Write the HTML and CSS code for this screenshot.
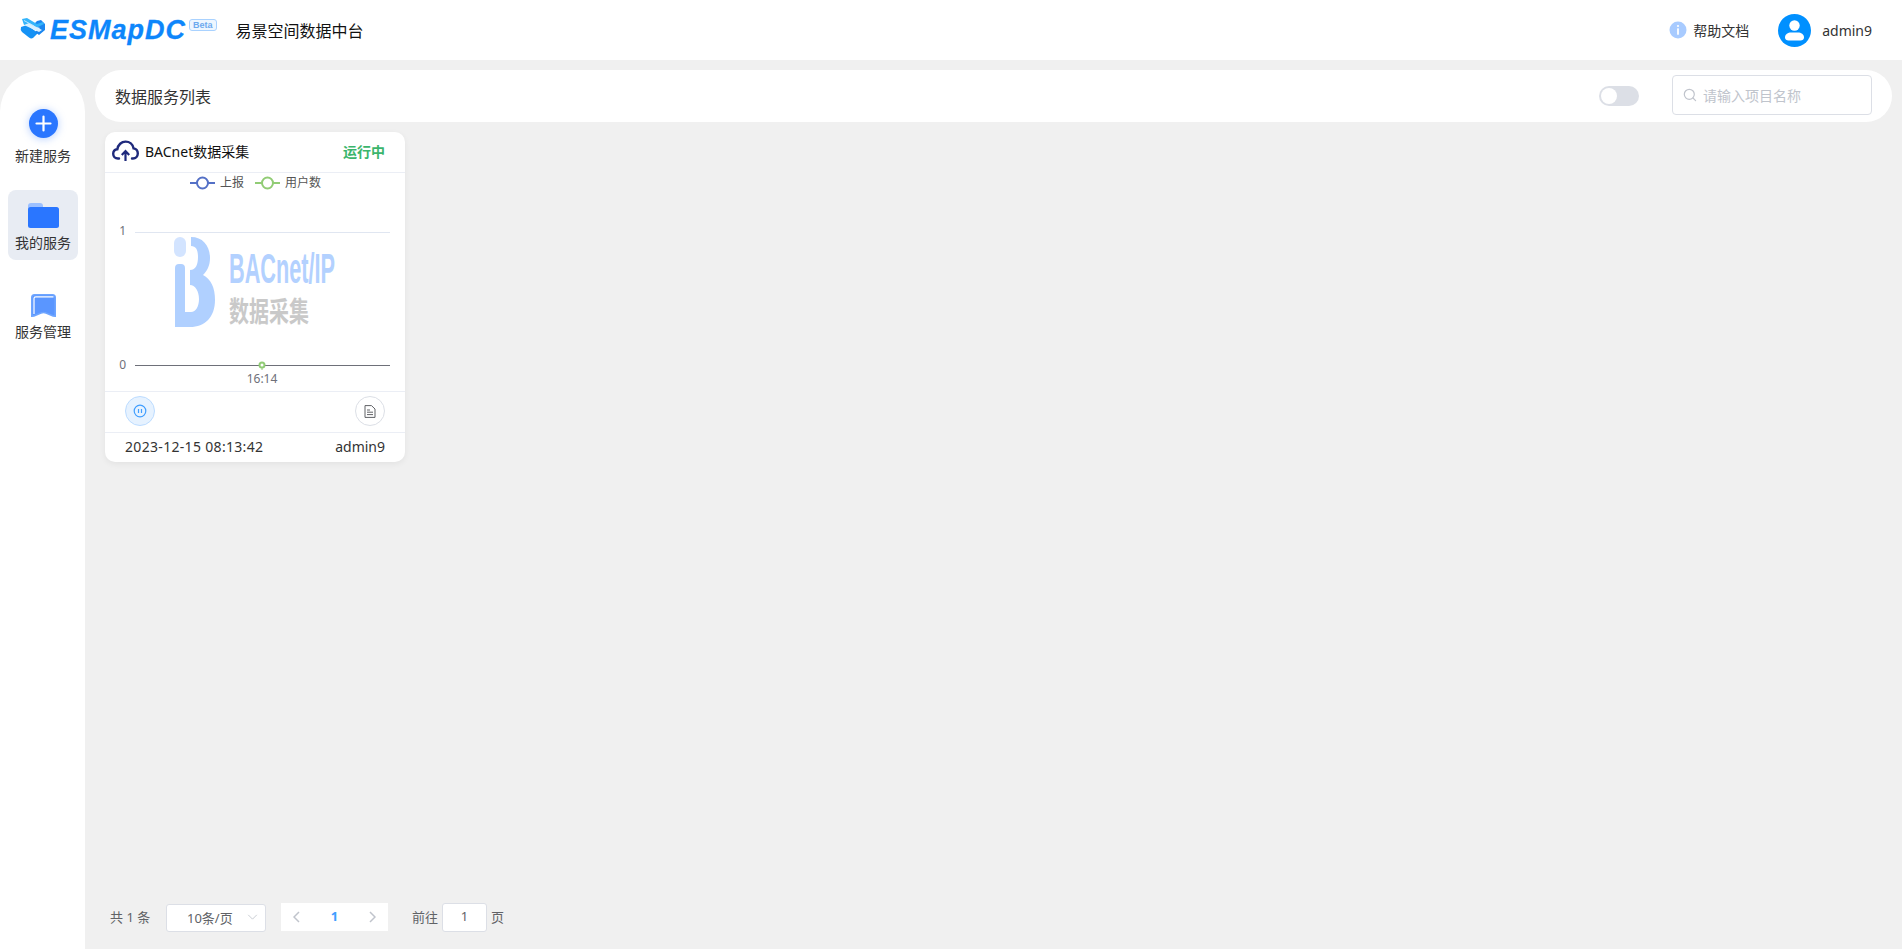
FILE: index.html
```html
<!DOCTYPE html>
<html lang="zh-CN">
<head>
<meta charset="utf-8">
<title>易景空间数据中台</title>
<link rel="stylesheet" href="styles.css">
</head>
<body>
<header class="topbar">
  <div class="brand">
    <svg class="brand-mark" viewBox="0 0 26 21" width="26" height="21">
      <path d="M1 9 L7 7 L18 15 L13 20 Q11 21 9 19.500 L2 14 Q0 12 1 9 Z" fill="#1592f5"/>
      <path d="M12 8 L17 3 L21 2 L25 6 L25 12 L19 17 L15 14 L20 10 Z" fill="#1a86f0"/>
      <path d="M2 1 L7 0 L17 6 L23 4 L24 6 L16 10 L13 8 L4 7 Z" fill="#33b4fb"/>
      <path d="M4 7 L9 5 L22 12 L19 14 Z" fill="#d8f0ff"/>
      <path d="M4 2.500 L14 8" stroke="#bfe6ff" stroke-width="1" fill="none"/>
    </svg>
    <span class="brand-name">ESMapDC</span>
    <span class="brand-beta">Beta</span>
    <span class="brand-title">易景空间数据中台</span>
  </div>
  <div class="top-right">
    <svg class="help-icon" viewBox="0 0 18 18" width="18" height="18">
      <circle cx="9" cy="9" r="8.5" fill="#a8cbff"/>
      <circle cx="9" cy="5" r="1.1" fill="#fff"/>
      <rect x="8.1" y="7.2" width="1.8" height="6.6" rx=".6" fill="#fff"/>
    </svg>
    <span class="help-text">帮助文档</span>
    <svg class="avatar" viewBox="0 0 33 33" width="33" height="33">
      <circle cx="16.5" cy="16.5" r="16.5" fill="#0090ff"/>
      <circle cx="16.5" cy="11.5" r="5.2" fill="#fff"/>
      <path d="M7 23.5 C7 20 10 18.5 13 18.5 L20 18.5 C23 18.5 26 20 26 23.5 C26 25.5 24.5 26.5 22.5 26.5 L10.5 26.5 C8.5 26.5 7 25.5 7 23.5 Z" fill="#fff"/>
    </svg>
    <span class="user-name">admin9</span>
  </div>
</header>

<div class="shell">
  <aside class="sidebar">
    <a class="nav-item nav-add">
      <svg class="nav-plus" viewBox="0 0 29 29" width="29" height="29">
        <circle cx="14.5" cy="14.5" r="14.5" fill="#2a76ff"/>
        <path d="M14.5 7.5 V21.5 M7.5 14.5 H21.5" stroke="#fff" stroke-width="2.2" stroke-linecap="round"/>
      </svg>
      <span class="nav-label">新建服务</span>
    </a>
    <a class="nav-item nav-active">
      <svg viewBox="0 0 31 26" width="31" height="26">
        <path d="M0 3 Q0 0 3 0 L12 0 Q15 0 15 3 L15 8 L0 8 Z" fill="#9cc0ff"/>
        <rect x="0" y="4" width="31" height="21" rx="2.5" fill="#2a76ff"/>
      </svg>
      <span class="nav-label">我的服务</span>
    </a>
    <a class="nav-item nav-last">
      <svg viewBox="0 0 25 23" width="25" height="23">
        <path d="M.8 3.500 Q.8 .8 3.500 .8 L21.500 .8 Q24.200 .8 24.200 3.500 L24.200 22.200 C21 22.200 16 18.500 12.500 18.500 C9 18.500 4 22.200 .8 22.200 Z" fill="#5a96ff" stroke="#6ea5ff" stroke-width="1.600"/>
        <path d="M3 20 V4.500 Q3 2.800 4.800 2.800 L22.500 2.800" fill="none" stroke="#fff" stroke-width="1.200"/>
      </svg>
      <span class="nav-label">服务管理</span>
    </a>
  </aside>

  <main class="content">
    <div class="titlebar">
      <span class="page-title">数据服务列表</span>
      <div class="title-tools">
        <span class="switch"><span class="switch-knob"></span></span>
        <label class="search">
          <svg viewBox="0 0 14 14" width="14" height="14">
            <circle cx="6.3" cy="6.3" r="5" fill="none" stroke="#c0c4cc" stroke-width="1.2"/>
            <path d="M10 10 L12.6 12.6" stroke="#c0c4cc" stroke-width="1.2" stroke-linecap="round"/>
          </svg>
          <span class="search-ph">请输入项目名称</span>
        </label>
      </div>
    </div>

    <div class="cards">
      <article class="card">
        <div class="card-head">
          <svg class="cloud" viewBox="0 0 27 22" width="27" height="22">
            <path d="M7 18.5 H6 C3 18.5 1.2 16.3 1.2 13.8 C1.2 11.2 3 9.4 5.4 9.2 C6 4.8 9.4 1.6 13.6 1.6 C17.6 1.6 20.8 4.4 21.6 8.4 C24 8.8 25.8 11 25.8 13.6 C25.8 16.4 23.6 18.5 21 18.5 H20" fill="none" stroke="#1f2a7c" stroke-width="2.4" stroke-linecap="round"/>
            <path d="M13.5 21 V11.5 M9.8 15 L13.5 11 L17.2 15" fill="none" stroke="#1f2a7c" stroke-width="2.2"/>
          </svg>
          <span class="card-title">BACnet数据采集</span>
          <span class="card-status">运行中</span>
        </div>
        <div class="card-chart">
          <svg class="chart-svg" viewBox="105 173 300 218" width="300" height="218">
            <g fill="none" stroke-width="2">
              <path d="M190 183 H215" stroke="#5470c6"/>
              <circle cx="202.500" cy="183" r="5.500" fill="#fff" stroke="#5470c6"/>
              <path d="M255 183 H280" stroke="#91cc75"/>
              <circle cx="267.500" cy="183" r="5.500" fill="#fff" stroke="#91cc75"/>
            </g>
            <text class="legend-text" x="220" y="187">上报</text>
            <text class="legend-text" x="285" y="187">用户数</text>
            <path d="M135 232.500 H390" stroke="#e0e6f1"/>
            <text class="axis-text" x="126" y="235" text-anchor="end">1</text>
            <rect x="174" y="237" width="12" height="20" rx="6" fill="#d3e4ff"/>
            <path d="M191 237 C203 237 210 246 210 258 C210 266 207 271 203 275 C211 279 215 288 215 300 C215 317 205 327 190 327 L175 327 L175 268 Q175 264 179 264 L181 264 Q185 264 185 268 L185 312 L191 312 C196 312 199 306 199 299 C199 291 195 285 190 285 L190 270 C196 270 198 264 198 257 C198 250 196 246 191 246 Z" fill="#b0d0ff"/>
            <text class="wm-latin" transform="translate(229 283) scale(1 2)">BACnet/IP</text>
            <text class="wm-cjk" transform="translate(229 322) scale(1 1.400)">数据采集</text>
            <path d="M135 365.500 H390" stroke="#6e7079"/>
            <text class="axis-text" x="126" y="369" text-anchor="end">0</text>
            <path d="M262 366 V370" stroke="#91cc75"/>
            <circle cx="262" cy="365" r="2.500" fill="#fff" stroke="#91cc75" stroke-width="2"/>
            <text class="axis-text" x="262" y="383" text-anchor="middle">16:14</text>
          </svg>
        </div>
        <div class="card-actions">
          <span class="round-btn round-on">
            <svg viewBox="0 0 14 14" width="14" height="14">
              <circle cx="7" cy="7" r="5.800" fill="none" stroke="#409eff" stroke-width="1.200"/>
              <path d="M5.500 5 V9 M8.500 5 V9" stroke="#409eff" stroke-width="1.200"/>
            </svg>
          </span>
          <span class="round-btn">
            <svg viewBox="0 0 12 13" width="12" height="13">
              <path d="M1 .6 H7.500 L11 4 V12.400 H1 Z" fill="none" stroke="#606266" stroke-width="1"/>
              <path d="M3 5 H6 M3 7.200 H9 M3 9.600 H9" stroke="#606266" stroke-width="1"/>
            </svg>
          </span>
        </div>
        <div class="card-foot">
          <span class="foot-date">2023-12-15 08:13:42</span>
          <span>admin9</span>
        </div>
      </article>
    </div>

    <nav class="pagination">
      <span class="pg-total">共 1 条</span>
      <span class="pg-select">
        <span class="pg-select-text">10条/页</span>
        <svg viewBox="0 0 12 7" width="11" height="6"><path d="M1 1 L6 6 L11 1" fill="none" stroke="#c0c4cc"/></svg>
      </span>
      <span class="pg-pager">
        <svg viewBox="0 0 7 12" width="7" height="12"><path d="M6 1 L1 6 L6 11" fill="none" stroke="#c0c4cc" stroke-width="1.500"/></svg>
        <b class="pg-current">1</b>
        <svg viewBox="0 0 7 12" width="7" height="12"><path d="M1 1 L6 6 L1 11" fill="none" stroke="#c0c4cc" stroke-width="1.500"/></svg>
      </span>
      <span class="pg-jump">前往</span>
      <span class="pg-input">1</span>
      <span class="pg-unit">页</span>
    </nav>
  </main>
</div>
</body>
</html>
```

FILE: styles.css
```css
* { box-sizing: border-box; }
html, body { margin: 0; height: 100%; }
body {
  display: flex;
  flex-direction: column;
  height: 949px;
  overflow: hidden;
  background: #f0f0f0;
  color: #333;
  font-family: "Noto Sans", "Noto Sans CJK SC", sans-serif;
  font-size: 14px;
}

/* top bar */
.topbar {
  display: flex;
  align-items: center;
  justify-content: space-between;
  flex: none;
  height: 60px;
  padding: 0 30px 0 20px;
  background: #fff;
}
.brand { display: flex; align-items: center; }
.brand-mark { display: block; margin-top: -3px; }
.brand-name {
  margin-left: 4px;
  font-family: "Liberation Sans", sans-serif;
  font-size: 27px;
  font-style: italic;
  font-weight: 700;
  letter-spacing: 1px;
  line-height: 30px;
  color: #0d86fb;
  -webkit-text-stroke: .3px #0d86fb;
}
.brand-beta {
  align-self: flex-start;
  margin: 4px 0 0 3px;
  padding: 0 3px;
  border: 1px solid #a9d2ff;
  border-radius: 3px;
  background: #eef6ff;
  color: #6da9ee;
  font-family: "Liberation Sans", sans-serif;
  font-size: 9px;
  font-weight: 700;
  line-height: 10px;
}
.brand-title {
  margin-left: 19px;
  color: #111;
  font-size: 16px;
}
.top-right { display: flex; align-items: center; }
.help-text { margin-left: 6px; font-size: 14px; }
.avatar { margin-left: 29px; }
.user-name { margin-left: 11px; font-size: 14px; }

/* layout */
.shell { display: flex; flex: 1; min-height: 0; }
.sidebar {
  flex: none;
  width: 85px;
  margin-top: 10px;
  padding: 34px 7px 0 8px;
  background: #fff;
  border-radius: 42px 42px 0 0;
}
.nav-item {
  display: flex;
  flex-direction: column;
  align-items: center;
  height: 70px;
  padding-top: 12px;
  border-radius: 8px;
}
.nav-item svg { display: block; flex: none; }
.nav-label { font-size: 14px; line-height: 20px; color: #333; }
.nav-active { background: #e8ecf3; margin-top: 16px; padding-top: 13px; }
.nav-active .nav-label { margin-top: 4px; }
.nav-last { margin-top: 20px; padding-top: 14px; }
.nav-last .nav-label { margin-top: 5px; }
.nav-add { padding-top: 5px; }
.nav-add .nav-label { margin-top: 8px; }
.nav-plus { filter: drop-shadow(0 1px 4px rgba(42, 118, 255, .35)); }

.content {
  display: flex;
  flex: 1;
  flex-direction: column;
  min-width: 0;
  padding: 10px 10px 0;
}
.titlebar {
  display: flex;
  align-items: center;
  justify-content: space-between;
  flex: none;
  height: 52px;
  padding: 0 20px;
  background: #fff;
  border-radius: 26px;
}
.page-title { font-size: 16px; color: #333; }
.title-tools { display: flex; align-items: center; }
.switch {
  display: block;
  width: 40px;
  height: 20px;
  padding: 2px;
  background: #dcdfe6;
  border-radius: 10px;
}
.switch-knob {
  display: block;
  width: 16px;
  height: 16px;
  background: #fff;
  border-radius: 50%;
}
.search {
  display: flex;
  align-items: center;
  width: 200px;
  height: 40px;
  margin: 0 0 2px 33px;
  padding-left: 10px;
  border: 1px solid #dcdfe6;
  border-radius: 4px;
}
.search-ph { margin-left: 6px; color: #c0c4cc; font-size: 14px; }

/* card */
.cards { flex: none; padding: 10px 10px 0; }
.card {
  width: 300px;
  height: 330px;
  background: #fff;
  border-radius: 10px;
  box-shadow: 0 2px 6px rgba(0, 0, 0, .06);
  overflow: hidden;
}
.card-head {
  display: flex;
  align-items: center;
  height: 41px;
  padding: 0 20px 2px 7px;
  border-bottom: 1px solid #ebeef5;
}
.cloud { display: block; flex: none; }
.card-title { margin-left: 6px; color: #111; font-size: 14px; }
.card-status { margin-left: auto; color: #3bb56c; font-size: 14px; font-weight: 700; }
.card-chart { height: 218px; }
.chart-svg { display: block; }
.legend-text { font-size: 12px; fill: #555; }
.axis-text { font-size: 12px; fill: #6e7079; }
.wm-latin { font-family: "Liberation Sans", sans-serif; font-size: 21.700px; font-weight: 700; fill: #b3d1ff; }
.wm-cjk { font-size: 20px; font-weight: 700; fill: #c9c9c9; }
.card-actions {
  display: flex;
  align-items: center;
  justify-content: space-between;
  height: 41px;
  padding: 0 20px 2px;
  border-top: 1px solid #ebeef5;
}
.round-btn {
  display: flex;
  align-items: center;
  justify-content: center;
  width: 30px;
  height: 30px;
  border: 1px solid #dcdfe6;
  border-radius: 50%;
}
.round-on { background: #e6f2ff; border-color: #bcdcff; }
.card-foot {
  display: flex;
  align-items: center;
  justify-content: space-between;
  height: 30px;
  padding: 0 20px 2px;
  border-top: 1px solid #ebeef5;
  color: #333;
  font-size: 14px;
}
.foot-date { letter-spacing: .32px; }

/* pagination */
.pagination {
  display: flex;
  align-items: center;
  flex: none;
  margin-top: auto;
  height: 28px;
  margin-bottom: 18px;
  padding-left: 15px;
  color: #606266;
  font-size: 13px;
}
.pg-total { width: 56px; padding-bottom: 2px; }
.pg-select {
  display: flex;
  align-items: center;
  justify-content: space-between;
  width: 100px;
  height: 28px;
  margin-top: 2px;
  padding: 0 7px 2px 20px;
  border: 1px solid #dcdfe6;
  border-radius: 3px;
  background: #fff;
}
.pg-pager {
  display: flex;
  align-items: center;
  justify-content: space-between;
  width: 107px;
  height: 28px;
  margin-left: 15px;
  padding: 0 12px;
  background: #fff;
}
.pg-current { color: #409eff; font-size: 13px; padding-bottom: 2px; }
.pg-jump { margin-left: 24px; padding-bottom: 2px; }
.pg-input {
  display: flex;
  align-items: center;
  justify-content: center;
  width: 45px;
  height: 29px;
  margin-left: 4px;
  padding-bottom: 2px;
  border: 1px solid #dcdfe6;
  border-radius: 3px;
  background: #fff;
}
.pg-unit { margin-left: 4px; padding-bottom: 2px; }
```
